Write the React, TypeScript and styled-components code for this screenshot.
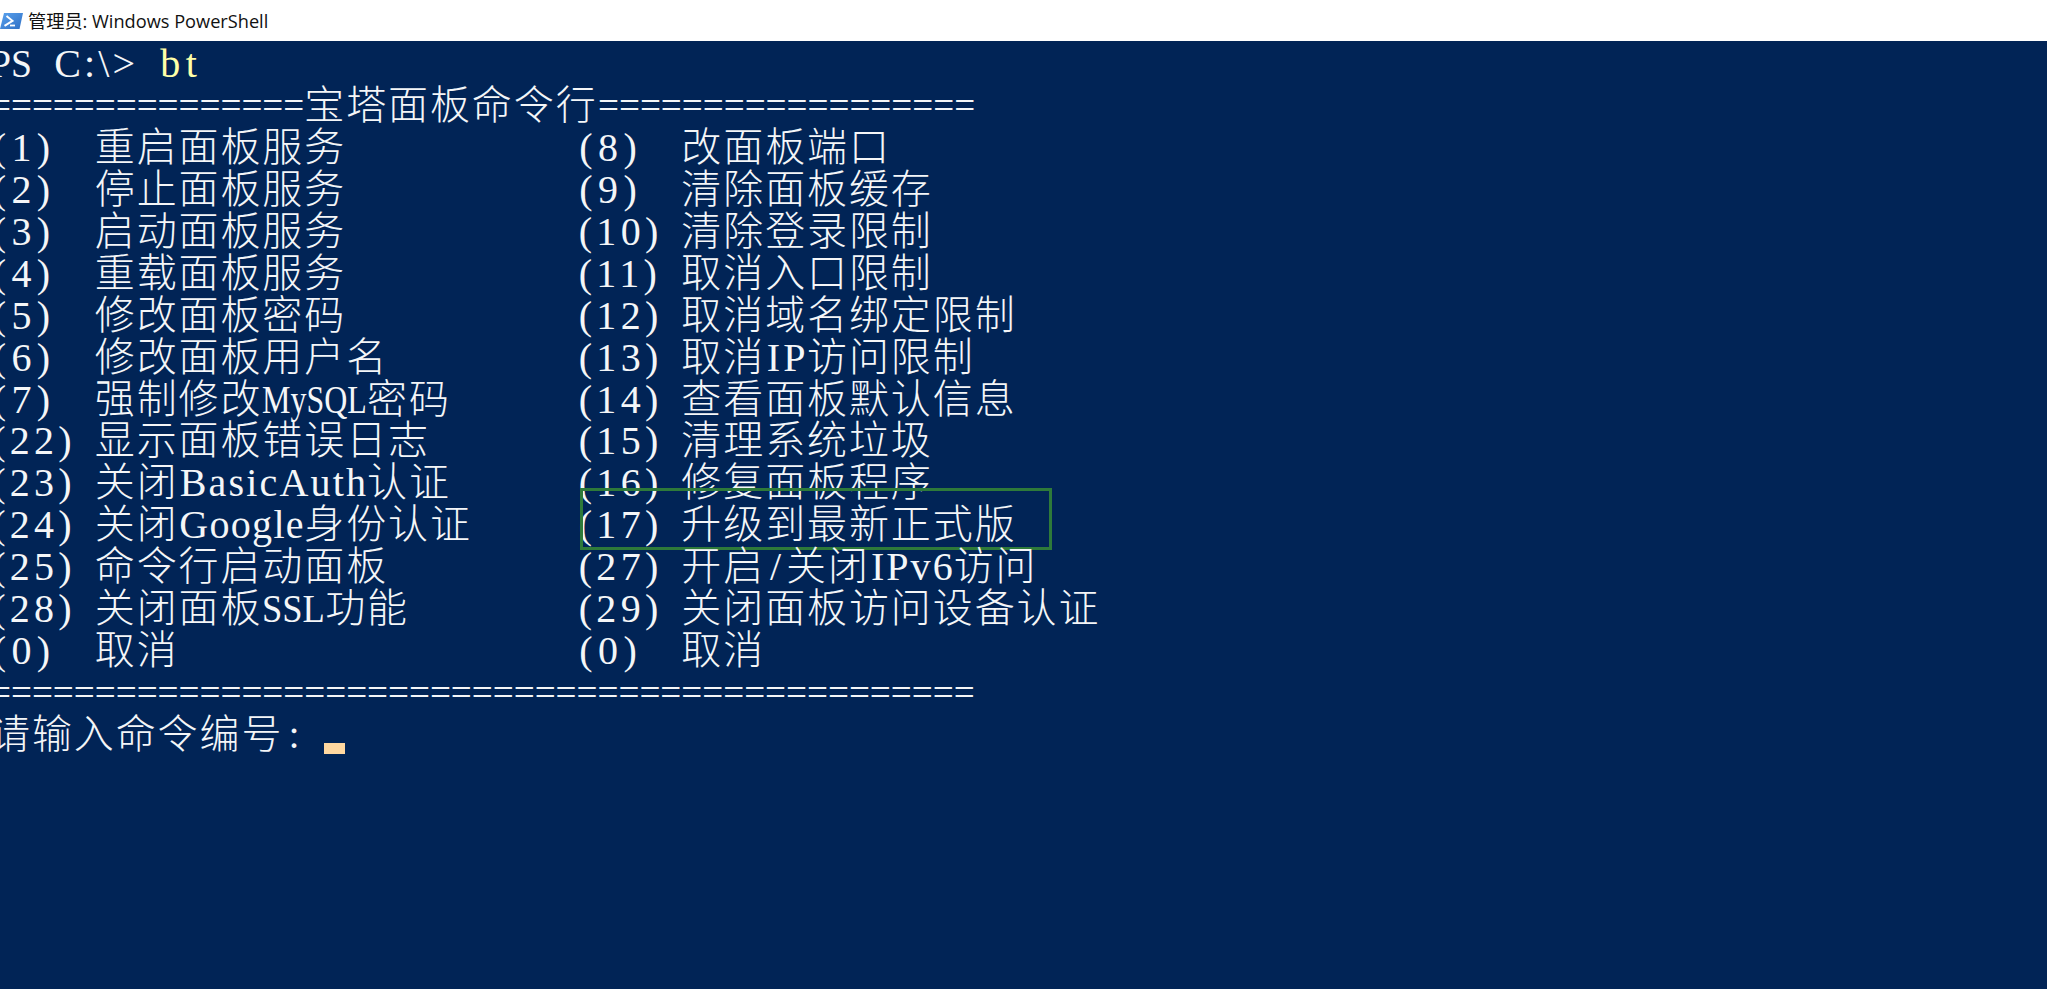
import React from "react";
import styled, { createGlobalStyle } from "styled-components";

const CELL = 20.95;
const ROW = 41.94;
const LATIN_SIZE = 40;

const Global = createGlobalStyle`
  html, body { margin: 0; padding: 0; background: #012456; overflow: hidden; }
`;

const Window = styled.div`
  width: 2047px;
  height: 989px;
  display: flex;
  flex-direction: column;
  overflow: hidden;
`;

const TitleBar = styled.header`
  height: 41px;
  flex: none;
  background: #fff;
  display: flex;
  align-items: center;
  gap: 5px;
  color: #111;
  font: 400 18.2px/38px "Open Sans", "Noto Sans CJK SC", sans-serif;
  white-space: nowrap;
`;

const AppIcon = styled.svg`
  width: 23px;
  height: 18px;
  flex: none;
`;

const Console = styled.main`
  flex: 1;
  background: #012456;
  color: #f4f6f8;
  padding-top: 2px;
  margin-left: -10px;
  font: 400 ${LATIN_SIZE}px/${ROW}px "Liberation Serif", serif;
  white-space: pre;
`;

const Line = styled.div`
  height: ${ROW}px;
  position: relative;
`;

const MenuRow = styled(Line)`
  display: grid;
  grid-template-columns: ${CELL * 28}px auto;
`;

const MenuItem = styled.div`
  display: grid;
  grid-template-columns: ${CELL * 5}px auto;
  align-items: baseline;
  position: relative;
`;

const Cjk = styled.span`
  font-family: "Noto Sans CJK SC", sans-serif;
  font-size: 40px;
  line-height: 0;
  letter-spacing: 1.9px;
  font-weight: 300;
`;

const Latin = styled.span<{ $accent?: boolean }>`
  display: inline-block;
  transform-origin: left center;
  color: ${(p) => (p.$accent ? "#ffffa8" : "inherit")};
`;

const Highlight = styled.div`
  position: absolute;
  left: 3px;
  top: -16px;
  width: 472px;
  height: 62px;
  box-sizing: border-box;
  border: 3.5px solid #2e7a3a;
  pointer-events: none;
`;

const Cursor = styled.span`
  display: inline-block;
  width: 21px;
  height: 11px;
  background: #ffd8a0;
  vertical-align: -6px;
  margin-left: -1px;
`;

const W: Record<string, number> = {
  "(": 0.333, ")": 0.333, " ": 0.25, "=": 0.564, ":": 0.278, "\\": 0.278, ">": 0.564, "/": 0.278,
  P: 0.556, S: 0.556, C: 0.667, M: 0.889, Q: 0.722, L: 0.611, B: 0.667, A: 0.722, G: 0.722, I: 0.333,
  a: 0.444, b: 0.5, c: 0.444, e: 0.444, g: 0.5, h: 0.5, i: 0.278, l: 0.278, o: 0.5, s: 0.389,
  t: 0.278, u: 0.5, v: 0.5, y: 0.5,
};

function Mono({ text, accent }: { text: string; accent?: boolean }) {
  const natural = [...text].reduce((s, c) => s + (W[c] ?? 0.5) * LATIN_SIZE, 0);
  const target = text.length * CELL;
  const fits = natural <= target;
  const spacing = fits ? (target - natural) / text.length : 0;
  return (
    <Latin
      $accent={accent}
      style={{
        width: target,
        letterSpacing: spacing,
        textIndent: spacing / 2,
        transform: fits ? undefined : `scaleX(${target / natural})`,
      }}
    >
      {text}
    </Latin>
  );
}

function Mixed({ text }: { text: string }) {
  const parts = text.split(/([\u4e00-\u9fff]+)/);
  return (
    <>
      {parts.map((p, i) =>
        i % 2 ? (
          <Cjk key={i}>{p}</Cjk>
        ) : p ? (
          <Mono key={i} text={p} />
        ) : null
      )}
    </>
  );
}

const rows: [string, string, string, string][] = [
  ["(1)", "重启面板服务", "(8)", "改面板端口"],
  ["(2)", "停止面板服务", "(9)", "清除面板缓存"],
  ["(3)", "启动面板服务", "(10)", "清除登录限制"],
  ["(4)", "重载面板服务", "(11)", "取消入口限制"],
  ["(5)", "修改面板密码", "(12)", "取消域名绑定限制"],
  ["(6)", "修改面板用户名", "(13)", "取消IP访问限制"],
  ["(7)", "强制修改MySQL密码", "(14)", "查看面板默认信息"],
  ["(22)", "显示面板错误日志", "(15)", "清理系统垃圾"],
  ["(23)", "关闭BasicAuth认证", "(16)", "修复面板程序"],
  ["(24)", "关闭Google身份认证", "(17)", "升级到最新正式版"],
  ["(25)", "命令行启动面板", "(27)", "开启/关闭IPv6访问"],
  ["(28)", "关闭面板SSL功能", "(29)", "关闭面板访问设备认证"],
  ["(0)", "取消", "(0)", "取消"],
];

export default function App() {
  return (
    <Window>
      <Global />
      <TitleBar>
        <AppIcon viewBox="0 0 23 18">
          <defs>
            <linearGradient id="ps" x1="0" y1="0" x2="1" y2="1">
              <stop offset="0" stopColor="#5aa2ee" />
              <stop offset="1" stopColor="#2f6fc4" />
            </linearGradient>
          </defs>
          <path d="M4 1h19l-3.5 16H0z" fill="url(#ps)" />
          <path d="M6.5 4l6 4.8-8 5" fill="none" stroke="#fff" strokeWidth="2" />
          <path d="M10 13.5h5" stroke="#fff" strokeWidth="1.8" />
        </AppIcon>
        管理员: Windows PowerShell
      </TitleBar>
      <Console>
        <Line>
          <Mono text="PS" />
          <Mono text=" " />
          <Mono text="C:\>" />
          <Mono text=" " />
          <Mono text="bt" accent />
        </Line>
        <Line>
          <Mono text={"=".repeat(15)} />
          <Cjk>宝塔面板命令行</Cjk>
          <Mono text={"=".repeat(18)} />
        </Line>
        {rows.map(([a, la, b, lb]) => (
          <MenuRow key={a + b}>
            <MenuItem>
              <Mono text={a} />
              <span>
                <Mixed text={la} />
              </span>
            </MenuItem>
            <MenuItem>
              <Mono text={b} />
              <span>
                <Mixed text={lb} />
              </span>
              {b === "(17)" && <Highlight />}
            </MenuItem>
          </MenuRow>
        ))}
        <Line>
          <Mono text={"=".repeat(47)} />
        </Line>
        <Line>
          <Cjk>请输入命令编号</Cjk>
          <Mono text=": " />
          <Cursor />
        </Line>
      </Console>
    </Window>
  );
}
